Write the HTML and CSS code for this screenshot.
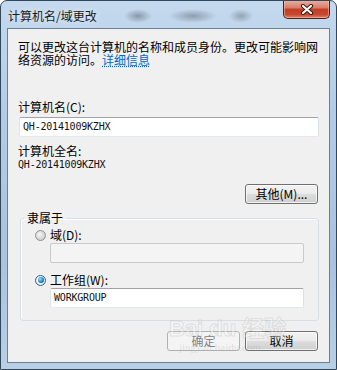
FILE: index.html
```html
<!DOCTYPE html>
<html lang="zh-CN">
<head>
    <meta charset="UTF-8">
    <title>计算机名/域更改</title>
    <link rel="stylesheet" href="styles.css">
</head>
<body>
    <div class="window">
        <div class="titlebar">
            <span class="title">计算机名/域更改</span>
            <button class="close">
                <svg width="14" height="11" viewBox="0 0 14 11">
                    <path d="M3 2 L11 9 M11 2 L3 9" stroke="#3a1a12" stroke-width="4.2" stroke-linecap="round"/>
                    <path d="M3 2 L11 9 M11 2 L3 9" stroke="#ffffff" stroke-width="2.2" stroke-linecap="round"/>
                </svg>
            </button>
        </div>
        <div class="client">
            <p class="desc">可以更改这台计算机的名称和成员身份。更改可能影响网络资源的访问。<a href="#" class="more">详细信息</a></p>
            <div class="label name-label">计算机名(C):</div>
            <div class="field main">QH-20141009KZHX</div>
            <div class="label full-label">计算机全名:</div>
            <div class="mono value">QH-20141009KZHX</div>
            <div class="row-right">
                <button class="btn">其他(M)...</button>
            </div>
            <fieldset class="group">
                <legend>隶属于</legend>
                <div class="option"><span class="radio"></span>域(D):</div>
                <div class="field sub disabled"></div>
                <div class="option second"><span class="radio checked"></span>工作组(W):</div>
                <div class="field sub">WORKGROUP</div>
            </fieldset>
            <div class="actions">
                <button class="btn" disabled>确定</button>
                <button class="btn">取消</button>
            </div>
        </div>
        <!-- 水印 -->
        <div class="mark">
            <span class="mark-big">Bai du 经验</span>
            <span class="mark-small">jingyan.baidu.com</span>
        </div>
    </div>
</body>
</html>
```
FILE: styles.css
```css
*{margin: 0;padding: 0;box-sizing: border-box;}
body{
    width: 337px;
    height: 370px;
    background: #ffffff;
    font-family: "Noto Sans CJK SC", "Liberation Sans", sans-serif;
    font-size: 12px;
    color: #000;
}
.window{
    position: relative;
    width: 337px;
    height: 370px;
    border: 1px solid #33475c;
    border-radius: 7px 7px 0 0;
    background: linear-gradient(#c4d9ee, #b3cce6 30%, #a9c3df 70%, #b8cfe6);
    display: flex;
    flex-direction: column;
    overflow: hidden;
}
.titlebar{
    height: 27px;
    display: flex;
    justify-content: space-between;
    align-items: flex-start;
    background:
        radial-gradient(ellipse 14px 7px at 137px 15px, rgba(90,100,110,.55), transparent),
        radial-gradient(ellipse 24px 7px at 192px 15px, rgba(90,100,110,.5), transparent),
        radial-gradient(ellipse 12px 7px at 240px 15px, rgba(90,100,110,.45), transparent);
}
.title{
    padding: 8px 0 0 7px;
    line-height: 14px;
    color: #1a1a1a;
    text-shadow: 0 0 6px rgba(255,255,255,.9);
}
.close{
    width: 47px;
    height: 19px;
    margin: -1px 6px 0 0;
    border: 1px solid #4b2117;
    border-top: none;
    border-radius: 0 0 5px 5px;
    background: linear-gradient(#eab3a6, #d77a65 45%, #c23e26 50%, #c8472d 80%, #e0836b);
    box-shadow: inset 0 0 0 1px rgba(255,200,190,.5);
    display: flex;
    align-items: center;
    justify-content: center;
}
.client{
    height: 335px;
    margin: 0 6px 6px 6px;
    border: 1px solid #6d7f92;
    background: #f0f0f0;
    padding: 11px 10px 0 10px;
}
.desc{
    line-height: 13px;
    width: 301px;
}
.more{
    color: #0066cc;
    text-decoration: underline dotted;
}
.label{
    line-height: 14px;
}
.name-label{margin-top: 34px;}
.full-label{margin-top: 7px;}
.mono, .field{
    font-family: "DejaVu Sans Mono", "Liberation Mono", monospace;
    font-size: 10px;
    letter-spacing: -0.2px;
    color: #111;
}
.field{
    height: 20px;
    background: #fff;
    border: 1px solid #abadb3;
    border-top-color: #a0a3ab;
    border-left-color: #e2e3ea;
    border-right-color: #dbdfe6;
    border-bottom-color: #e3e9ef;
    border-radius: 2px;
    padding: 0 3px;
    line-height: 18px;
}
.field.main{
    width: 300px;
    margin: 3px 0 0 1px;
}
.value{
    line-height: 13px;
}
.row-right{
    display: flex;
    justify-content: flex-end;
    margin-top: 13px;
    padding-right: 1px;
}
.btn{
    width: 73px;
    height: 20px;
    border: 1px solid #707070;
    border-radius: 3px;
    background: linear-gradient(#f2f2f2, #ebebeb 48%, #dddddd 52%, #cfcfcf);
    box-shadow: inset 0 0 0 1px rgba(255,255,255,.7);
    font-family: "Noto Sans CJK SC", "Liberation Sans", sans-serif;
    font-size: 12px;
    line-height: 16px;
    color: #000;
}
.btn:disabled{
    border-color: #adb2b5;
    background: #f4f4f4;
    box-shadow: none;
    color: #838383;
}
.group{
    width: 299px;
    margin: 7px 0 0 2px;
    border: 1px solid #d5dfe5;
    border-radius: 3px;
    padding: 3px 0 12px 29px;
    box-shadow: inset 1px 1px 0 #fff;
}
.group legend{
    margin-left: -26px;
    padding: 0 3px 0 3px;
    line-height: 14px;
}
.option{
    display: flex;
    align-items: center;
    gap: 4px;
    margin-left: -15px;
    line-height: 14px;
}
.option.second{margin-top: 10px;}
.radio{
    width: 11px;
    height: 11px;
    border-radius: 50%;
    border: 1px solid #8e8f8f;
    background: radial-gradient(circle at 40% 40%, #f6f6f6, #d0d0d0 70%, #bcbcbc);
    display: flex;
    align-items: center;
    justify-content: center;
}
.radio.checked{
    border-color: #2c628b;
    background: radial-gradient(circle at 40% 40%, #ffffff, #d8e4ee);
}
.radio.checked::after{
    content: "";
    width: 6px;
    height: 6px;
    border-radius: 50%;
    background: radial-gradient(circle at 35% 35%, #9fdcff, #1a7fc0 60%, #0b4f85);
}
.field.sub{
    width: 254px;
    margin-top: 1px;
}
.field.disabled{
    background: #f4f4f4;
    border-color: #c8c9ca;
}
.actions{
    display: flex;
    justify-content: flex-end;
    gap: 5px;
    margin-top: 10px;
    padding-right: 1px;
}
.mark{
    position: absolute;
    left: 168px;
    top: 316px;
    display: flex;
    flex-direction: column;
    align-items: flex-start;
    pointer-events: none;
}
.mark-big{
    font-family: "Liberation Sans", "Noto Sans CJK SC", sans-serif;
    font-size: 22px;
    font-weight: bold;
    line-height: 24px;
    color: rgba(255,255,255,.35);
    -webkit-text-stroke: 1px rgba(170,170,170,.3);
}
.mark-small{
    margin-left: 10px;
    font-family: "Liberation Serif", serif;
    font-size: 11px;
    color: rgba(150,150,150,.25);
}
```
